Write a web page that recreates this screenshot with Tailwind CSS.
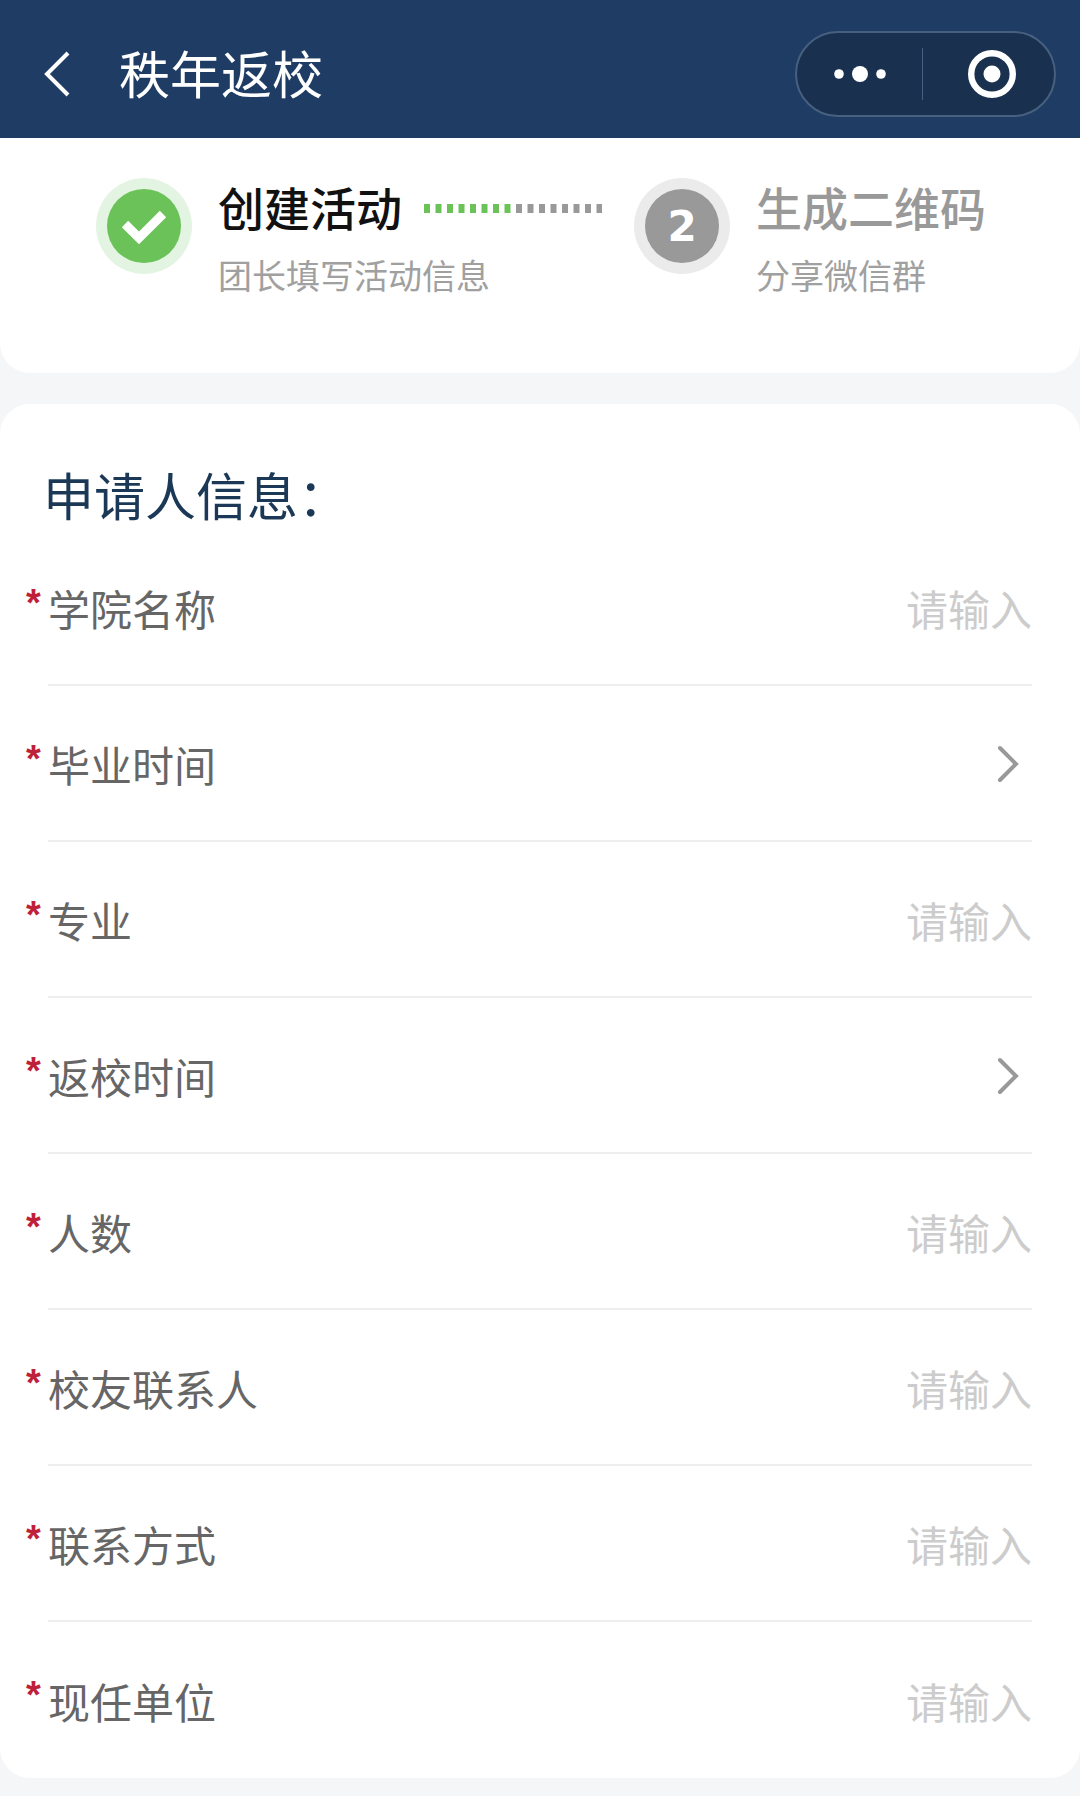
<!DOCTYPE html>
<html lang="zh-CN">
<head>
    <meta charset="UTF-8">
    <meta name="viewport" content="width=device-width, initial-scale=1.0">
    <title>秩年返校</title>
    <script src="https://cdn.jsdelivr.net/npm/@tailwindcss/browser@4"></script>
</head>
<body class="bg-[#f5f6f8] min-h-screen font-['Noto_Sans_CJK_SC',sans-serif]">
    <!-- Top bar -->
    <header class="bg-[#1e3c64] h-[138px] pt-[10px] pl-[43px] pr-[24px] flex items-center text-white">
        <button type="button" aria-label="返回" class="w-[28px] mr-[48px]">
            <svg class="w-[28px] h-[48px]" viewBox="0 0 28 48" fill="none" stroke="currentColor" stroke-width="4">
                <path d="M25 3L4 24L25 45"/>
            </svg>
        </button>
        <h1 class="flex-1 pb-[4px] text-[51px] leading-[64px]">秩年返校</h1>
        <div class="w-[261px] h-[86px] rounded-full border-2 border-[#47607f] bg-[#19314f] flex items-center">
            <button type="button" aria-label="更多" class="flex-1 h-[52px] flex items-center justify-center border-r border-[#47607f]">
                <svg class="w-[52px] h-[16px]" viewBox="0 0 52 16" fill="currentColor">
                    <circle cx="5" cy="8" r="4.8"/>
                    <circle cx="26" cy="8" r="8"/>
                    <circle cx="47" cy="8" r="4.8"/>
                </svg>
            </button>
            <button type="button" aria-label="关闭" class="flex-1 h-[52px] pl-[6px] flex items-center justify-center">
                <svg class="w-[48px] h-[48px]" viewBox="0 0 48 48">
                    <circle cx="24" cy="24" r="20.8" fill="none" stroke="currentColor" stroke-width="6.4"/>
                    <circle cx="24" cy="24" r="8.5" fill="currentColor"/>
                </svg>
            </button>
        </div>
    </header>

    <!-- Steps -->
    <section class="bg-white h-[235px] rounded-b-[30px] pt-[40px] pl-[96px] flex items-start gap-[32px]">
        <div class="flex items-start gap-[26px]">
            <div class="w-[96px] h-[96px] rounded-full bg-[#e3f4e3] flex items-center justify-center">
                <svg class="w-[74px] h-[74px]" viewBox="0 0 74 74" fill="none">
                    <circle cx="37" cy="37" r="37" fill="#6ac259"/>
                    <path d="M18 35L32 49L56 25" stroke="#fff" stroke-width="9"/>
                </svg>
            </div>
            <div class="pt-[2px]">
                <div class="flex items-center gap-[22px]">
                    <h2 class="text-[46px] leading-[52px] font-medium text-[#111]">创建活动</h2>
                    <svg class="w-[178px] h-[13px] pt-[4px]" viewBox="0 0 178 9" stroke-width="9" stroke-dasharray="6 5.5">
                        <path d="M0 4.5H89" stroke="#6ac259"/>
                        <path d="M92 4.5H178" stroke="#999"/>
                    </svg>
                </div>
                <p class="mt-[19px] text-[34px] leading-[48px] text-[#a0a0a0]">团长填写活动信息</p>
            </div>
        </div>
        <div class="flex items-start gap-[26px]">
            <div class="w-[96px] h-[96px] rounded-full bg-[#ebebeb] flex items-center justify-center">
                <span class="w-[74px] h-[74px] pt-[2px] rounded-full bg-[#999] flex items-center justify-center text-white font-bold text-[42px] leading-none font-['DejaVu_Sans',sans-serif]">2</span>
            </div>
            <div class="pt-[2px]">
                <h2 class="text-[46px] leading-[52px] font-medium text-[#999]">生成二维码</h2>
                <p class="mt-[19px] text-[34px] leading-[48px] text-[#a0a0a0]">分享微信群</p>
            </div>
        </div>
    </section>

    <!-- Applicant form -->
    <form class="bg-white mt-[31px] rounded-[30px] pt-[58px] pl-[26px] pr-[48px] text-[42px] text-[#666]">
        <h2 class="pl-[17px] mb-[4px] text-[51px] leading-[64px] text-[#1b3857]">申请人信息：</h2>

        <div class="flex h-[156px]">
            <span class="w-[22px] pt-[51px] text-[38px] leading-[44px] font-bold text-[#c01f3a] font-['Liberation_Sans',sans-serif]">*</span>
            <div class="flex-1 flex items-center border-b-2 border-[#eee]">
                <label for="college">学院名称</label>
                <input id="college" type="text" placeholder="请输入" class="flex-1 min-w-0 text-right outline-none placeholder:text-[#ccc]">
            </div>
        </div>

        <div class="flex h-[156px]">
            <span class="w-[22px] pt-[51px] text-[38px] leading-[44px] font-bold text-[#c01f3a] font-['Liberation_Sans',sans-serif]">*</span>
            <div class="flex-1 flex items-center border-b-2 border-[#eee]">
                <label for="graduated">毕业时间</label>
                <select id="graduated" class="flex-1 min-w-0 appearance-none outline-none"><option value=""></option></select>
                <svg class="w-[24px] h-[40px] mt-[2px] mr-[12px]" viewBox="0 0 24 40" fill="none" stroke="#999" stroke-width="4" stroke-linecap="round">
                    <path d="M4 4L20 20L4 36"/>
                </svg>
            </div>
        </div>

        <div class="flex h-[156px]">
            <span class="w-[22px] pt-[51px] text-[38px] leading-[44px] font-bold text-[#c01f3a] font-['Liberation_Sans',sans-serif]">*</span>
            <div class="flex-1 flex items-center border-b-2 border-[#eee]">
                <label for="major">专业</label>
                <input id="major" type="text" placeholder="请输入" class="flex-1 min-w-0 text-right outline-none placeholder:text-[#ccc]">
            </div>
        </div>

        <div class="flex h-[156px]">
            <span class="w-[22px] pt-[51px] text-[38px] leading-[44px] font-bold text-[#c01f3a] font-['Liberation_Sans',sans-serif]">*</span>
            <div class="flex-1 flex items-center border-b-2 border-[#eee]">
                <label for="visit">返校时间</label>
                <select id="visit" class="flex-1 min-w-0 appearance-none outline-none"><option value=""></option></select>
                <svg class="w-[24px] h-[40px] mt-[2px] mr-[12px]" viewBox="0 0 24 40" fill="none" stroke="#999" stroke-width="4" stroke-linecap="round">
                    <path d="M4 4L20 20L4 36"/>
                </svg>
            </div>
        </div>

        <div class="flex h-[156px]">
            <span class="w-[22px] pt-[51px] text-[38px] leading-[44px] font-bold text-[#c01f3a] font-['Liberation_Sans',sans-serif]">*</span>
            <div class="flex-1 flex items-center border-b-2 border-[#eee]">
                <label for="people">人数</label>
                <input id="people" type="text" placeholder="请输入" class="flex-1 min-w-0 text-right outline-none placeholder:text-[#ccc]">
            </div>
        </div>

        <div class="flex h-[156px]">
            <span class="w-[22px] pt-[51px] text-[38px] leading-[44px] font-bold text-[#c01f3a] font-['Liberation_Sans',sans-serif]">*</span>
            <div class="flex-1 flex items-center border-b-2 border-[#eee]">
                <label for="contact">校友联系人</label>
                <input id="contact" type="text" placeholder="请输入" class="flex-1 min-w-0 text-right outline-none placeholder:text-[#ccc]">
            </div>
        </div>

        <div class="flex h-[156px]">
            <span class="w-[22px] pt-[51px] text-[38px] leading-[44px] font-bold text-[#c01f3a] font-['Liberation_Sans',sans-serif]">*</span>
            <div class="flex-1 flex items-center border-b-2 border-[#eee]">
                <label for="phone">联系方式</label>
                <input id="phone" type="text" placeholder="请输入" class="flex-1 min-w-0 text-right outline-none placeholder:text-[#ccc]">
            </div>
        </div>

        <div class="flex h-[156px]">
            <span class="w-[22px] pt-[51px] text-[38px] leading-[44px] font-bold text-[#c01f3a] font-['Liberation_Sans',sans-serif]">*</span>
            <div class="flex-1 flex items-center">
                <label for="company">现任单位</label>
                <input id="company" type="text" placeholder="请输入" class="flex-1 min-w-0 text-right outline-none placeholder:text-[#ccc]">
            </div>
        </div>
    </form>
</body>
</html>
